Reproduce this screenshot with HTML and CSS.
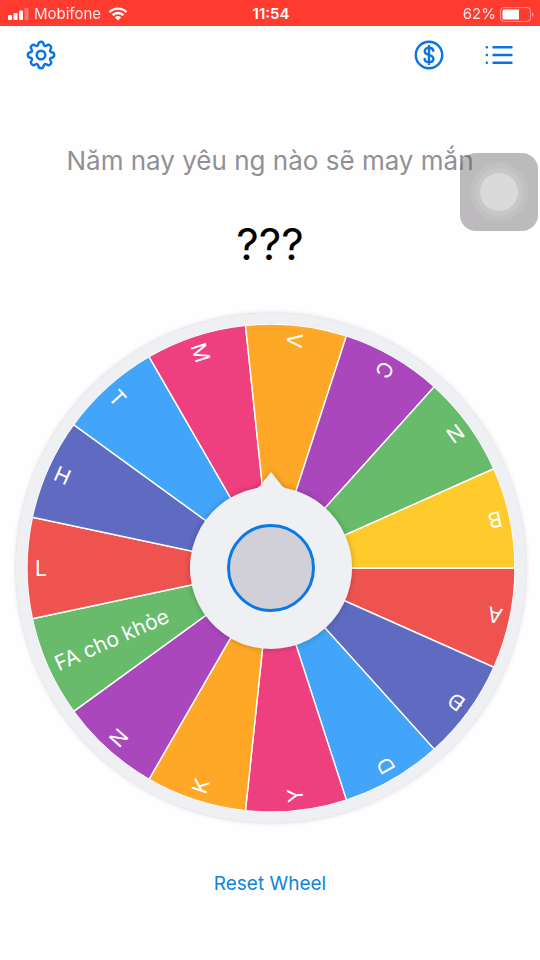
FILE: index.html
```html
<!DOCTYPE html>
<html lang="vi">
<head>
<meta charset="utf-8">
<meta name="viewport" content="width=device-width, initial-scale=1">
<title>Wheel</title>
<link rel="stylesheet" href="styles.css">
</head>
<body>
<div class="status">
  <div class="status-left">
    <svg class="signal" width="22" height="12" viewBox="0 0 22 12" aria-hidden="true">
      <rect x="0" y="7" width="4" height="5" rx="1"/>
      <rect x="5.500" y="5" width="4" height="7" rx="1"/>
      <rect x="11" y="2.500" width="4" height="9.500" rx="1"/>
      <rect x="16.500" y="0" width="4" height="12" rx="1" opacity=".3"/>
    </svg>
    <span>Mobifone</span>
    <svg class="wifi" width="20" height="14" viewBox="0 0 20 14" aria-hidden="true">
      <path d="M1.500 5.200a12 12 0 0 1 17 0" />
      <path d="M4.600 8.200a7.600 7.600 0 0 1 10.800 0" />
      <path class="dot" d="M10 13.500 6.900 10.400a4.400 4.400 0 0 1 6.200 0z"/>
    </svg>
  </div>
  <time class="clock">11:54</time>
  <div class="status-right">
    <span>62%</span>
    <svg width="34" height="15" viewBox="0 0 34 15" aria-hidden="true">
      <rect x=".6" y=".6" width="29.800" height="13.800" rx="3" fill="none" stroke="#fff" stroke-opacity=".5" stroke-width="1"/>
      <path d="M4 2.500h15v10H4a1.500 1.500 0 0 1-1.500-1.500V4A1.500 1.500 0 0 1 4 2.500z" fill="#fff"/>
      <path d="M32 5.200a2.500 2.500 0 0 1 0 4.600z" fill="#fff" fill-opacity=".5"/>
    </svg>
  </div>
</div>

<header class="toolbar">
  <button class="icon" aria-label="Settings">
    <svg width="30" height="30" viewBox="-15 -15 30 30">
      <circle r="4.300"/>
      <path d="M-2.700-10.700C-2.400-12.600-1.500-13.200 0-13.200S2.400-12.600 2.700-10.700C3-8.900 4.200-8.500 5.700-9.500C7.200-10.700 8.300-10.400 9.300-9.300S10.700-7.200 9.500-5.700C8.500-4.200 8.900-3 10.700-2.700C12.600-2.400 13.200-1.500 13.200 0S12.600 2.400 10.700 2.700C8.900 3 8.500 4.200 9.500 5.700C10.700 7.200 10.400 8.300 9.300 9.300S7.200 10.700 5.700 9.500C4.200 8.500 3 8.900 2.700 10.700C2.400 12.600 1.500 13.200 0 13.200S-2.400 12.600-2.700 10.700C-3 8.900-4.200 8.500-5.700 9.500C-7.200 10.700-8.300 10.400-9.300 9.300S-10.700 7.200-9.500 5.700C-8.500 4.200-8.900 3-10.700 2.700C-12.600 2.400-13.200 1.500-13.200 0S-12.600-2.400-10.700-2.700C-8.900-3-8.500-4.200-9.500-5.700C-10.700-7.200-10.400-8.300-9.300-9.300S-7.200-10.700-5.700-9.500C-4.200-8.500-3-8.900-2.700-10.700Z"/>
    </svg>
  </button>
  <div class="actions">
    <button class="icon" aria-label="Purchase">
      <svg width="30" height="30" viewBox="-15 -15 30 30">
        <circle r="13.200"/>
        <path d="M4.300-4.200C4-6.200 2.200-7.200 0-7.200S-4.300-5.900-4.300-3.800S-2.400-.8 0-.1S4.400 1.500 4.400 3.800S2.300 7.200 0 7.200S-4.200 6.200-4.400 4M0-9V9"/>
      </svg>
    </button>
    <button class="icon" aria-label="Lists">
      <svg width="30" height="30" viewBox="-15 -15 30 30">
        <path d="M-5.500-7.700H12.500M-5.500 0H12.500M-5.500 7.700H12.500M-12.200-7.700h.1M-12.200 0h.1M-12.200 7.700h.1"/>
      </svg>
    </button>
  </div>
</header>

<main>
  <h1 class="question">Năm nay yêu ng nào sẽ may mắn</h1>
  <output class="result">???</output>

  <div class="wheel">
    <svg class="disc" viewBox="-269 -265 538 530" role="img" aria-label="Wheel">
      <defs>
        <path id="s" d="M0 0 244 0A244 244 0 0 1 222.905 99.244Z"/>
        <filter id="shade" x="-20%" y="-20%" width="140%" height="140%">
          <feDropShadow dx="0" dy="0" stdDeviation="3" flood-color="#000" flood-opacity=".25"/>
        </filter>
        <filter id="rim" x="-5%" y="-5%" width="110%" height="110%">
          <feDropShadow dx="0" dy="0" stdDeviation="2" flood-color="#504060" flood-opacity=".3"/>
        </filter>
      </defs>
      <circle class="plate" r="254.500" filter="url(#rim)"/>
      <g class="slices">
        <use href="#s" class="red"/>
        <use href="#s" class="indigo" transform="rotate(24)"/>
        <use href="#s" class="blue" transform="rotate(48)"/>
        <use href="#s" class="pink" transform="rotate(72)"/>
        <use href="#s" class="orange" transform="rotate(96)"/>
        <use href="#s" class="purple" transform="rotate(120)"/>
        <use href="#s" class="green" transform="rotate(144)"/>
        <use href="#s" class="red" transform="rotate(168)"/>
        <use href="#s" class="indigo" transform="rotate(192)"/>
        <use href="#s" class="blue" transform="rotate(216)"/>
        <use href="#s" class="pink" transform="rotate(240)"/>
        <use href="#s" class="orange" transform="rotate(264)"/>
        <use href="#s" class="purple" transform="rotate(288)"/>
        <use href="#s" class="green" transform="rotate(312)"/>
        <use href="#s" class="yellow" transform="rotate(336)"/>
      </g>
      <circle class="edge" r="244.700"/>
      <g class="labels">
        <text x="-236" y="8" transform="rotate(192)">A</text>
        <text x="-236" y="8" transform="rotate(216)">Đ</text>
        <text x="-236" y="8" transform="rotate(240)">D</text>
        <text x="-236" y="8" transform="rotate(264)">Y</text>
        <text x="-236" y="8" transform="rotate(288)">K</text>
        <text x="-236" y="8" transform="rotate(312)">N</text>
        <text x="-236" y="8" transform="rotate(336)">FA cho khỏe</text>
        <text x="-236" y="8">L</text>
        <text x="-236" y="8" transform="rotate(24)">H</text>
        <text x="-236" y="8" transform="rotate(48)">T</text>
        <text x="-236" y="8" transform="rotate(72)">M</text>
        <text x="-236" y="8" transform="rotate(96)">V</text>
        <text x="-236" y="8" transform="rotate(120)">C</text>
        <text x="-236" y="8" transform="rotate(144)">N</text>
        <text x="-236" y="8" transform="rotate(168)">B</text>
      </g>
      <path class="plate" filter="url(#shade)" d="M0-96 11-82Q13-80 16-79.400A81 81 0 1 1-16-79.400Q-13-80-11-82Z"/>
    </svg>
    <button class="spin" aria-label="Spin"></button>
  </div>

  <button class="reset">Reset Wheel</button>
</main>

<button class="assist" aria-label="AssistiveTouch"><span class="ring"><span class="ring"><span class="ring core"></span></span></span></button>
</body>
</html>
```
FILE: styles.css
```css
* { box-sizing: border-box; }

body {
  margin: 0;
  min-height: 100vh;
  position: relative;
  background: #fefefe;
  color: #000;
  font-family: Inter, "Liberation Sans", sans-serif;
}

button {
  margin: 0;
  padding: 0;
  border: 0;
  background: none;
  font: inherit;
  color: inherit;
}

svg { display: block; }

.status {
  display: grid;
  grid-template-columns: 1fr auto 1fr;
  align-items: center;
  height: 26px;
  padding: 2px 6px 0 8px;
  background: #ff3b30;
  color: #fff;
  font-size: 15px;
  line-height: 24px;
}

.status-left,
.status-right {
  display: flex;
  align-items: center;
  gap: 4px;
}

.status-left span,
.status-right span { opacity: .88; }

.status-right { justify-content: flex-end; }

.signal { fill: #fff; }

.wifi {
  margin-left: 3px;
  fill: none;
  stroke: #fff;
  stroke-width: 2.4;
}

.wifi .dot { fill: #fff; stroke: none; }

.clock { font-weight: 600; }

.toolbar {
  display: flex;
  justify-content: space-between;
  padding: 14px 26px 0;
}

.actions { display: flex; gap: 40px; }

.icon svg {
  fill: none;
  stroke: #0a74e4;
  stroke-width: 2.4;
  stroke-linecap: round;
  stroke-linejoin: round;
}

main {
  display: flex;
  flex-direction: column;
  align-items: center;
}

.question {
  margin: 73px 0 0;
  color: #929096;
  font-size: 26px;
  font-weight: 400;
  line-height: 36px;
}

.result {
  margin-top: 35px;
  font-size: 44px;
  line-height: 60px;
}

.wheel {
  display: grid;
  width: 100%;
  margin-top: 29px;
  padding-left: 2px;
  place-items: center;
}

.disc,
.spin { grid-area: 1 / 1; }

.disc { width: 100%; height: auto; }

.plate { fill: #eff0f4; }

.slices { stroke: #fff; stroke-width: 1.4; }
.edge { fill: none; stroke: #eff0f4; stroke-width: 1.4; }
.red { fill: #ef5350; }
.indigo { fill: #5e6bc0; }
.blue { fill: #42a5f9; }
.pink { fill: #ee407e; }
.orange { fill: #ffa827; }
.purple { fill: #ab47bd; }
.green { fill: #68bb6b; }
.yellow { fill: #ffca2b; }

.labels {
  fill: #fff;
  font-size: 21px;
}

.spin {
  width: 16.5%;
  aspect-ratio: 1;
  border: 3px solid #0a78e6;
  border-radius: 50%;
  background: #d1d0d6;
}

.reset {
  margin-top: 37px;
  color: #0f86d8;
  font-size: 19px;
  line-height: 28px;
}

.assist {
  position: absolute;
  top: 153px;
  right: 2px;
  display: grid;
  place-items: center;
  width: 78px;
  height: 78px;
  border-radius: 16px;
  background: rgba(90, 86, 90, .4);
}

.ring {
  display: grid;
  place-items: center;
  width: 58px;
  height: 58px;
  border-radius: 50%;
  background: rgba(255, 255, 255, .1);
}

.ring .ring { width: 48px; height: 48px; }

.ring .core {
  width: 38px;
  height: 38px;
  background: rgba(255, 255, 255, .34);
}
```
